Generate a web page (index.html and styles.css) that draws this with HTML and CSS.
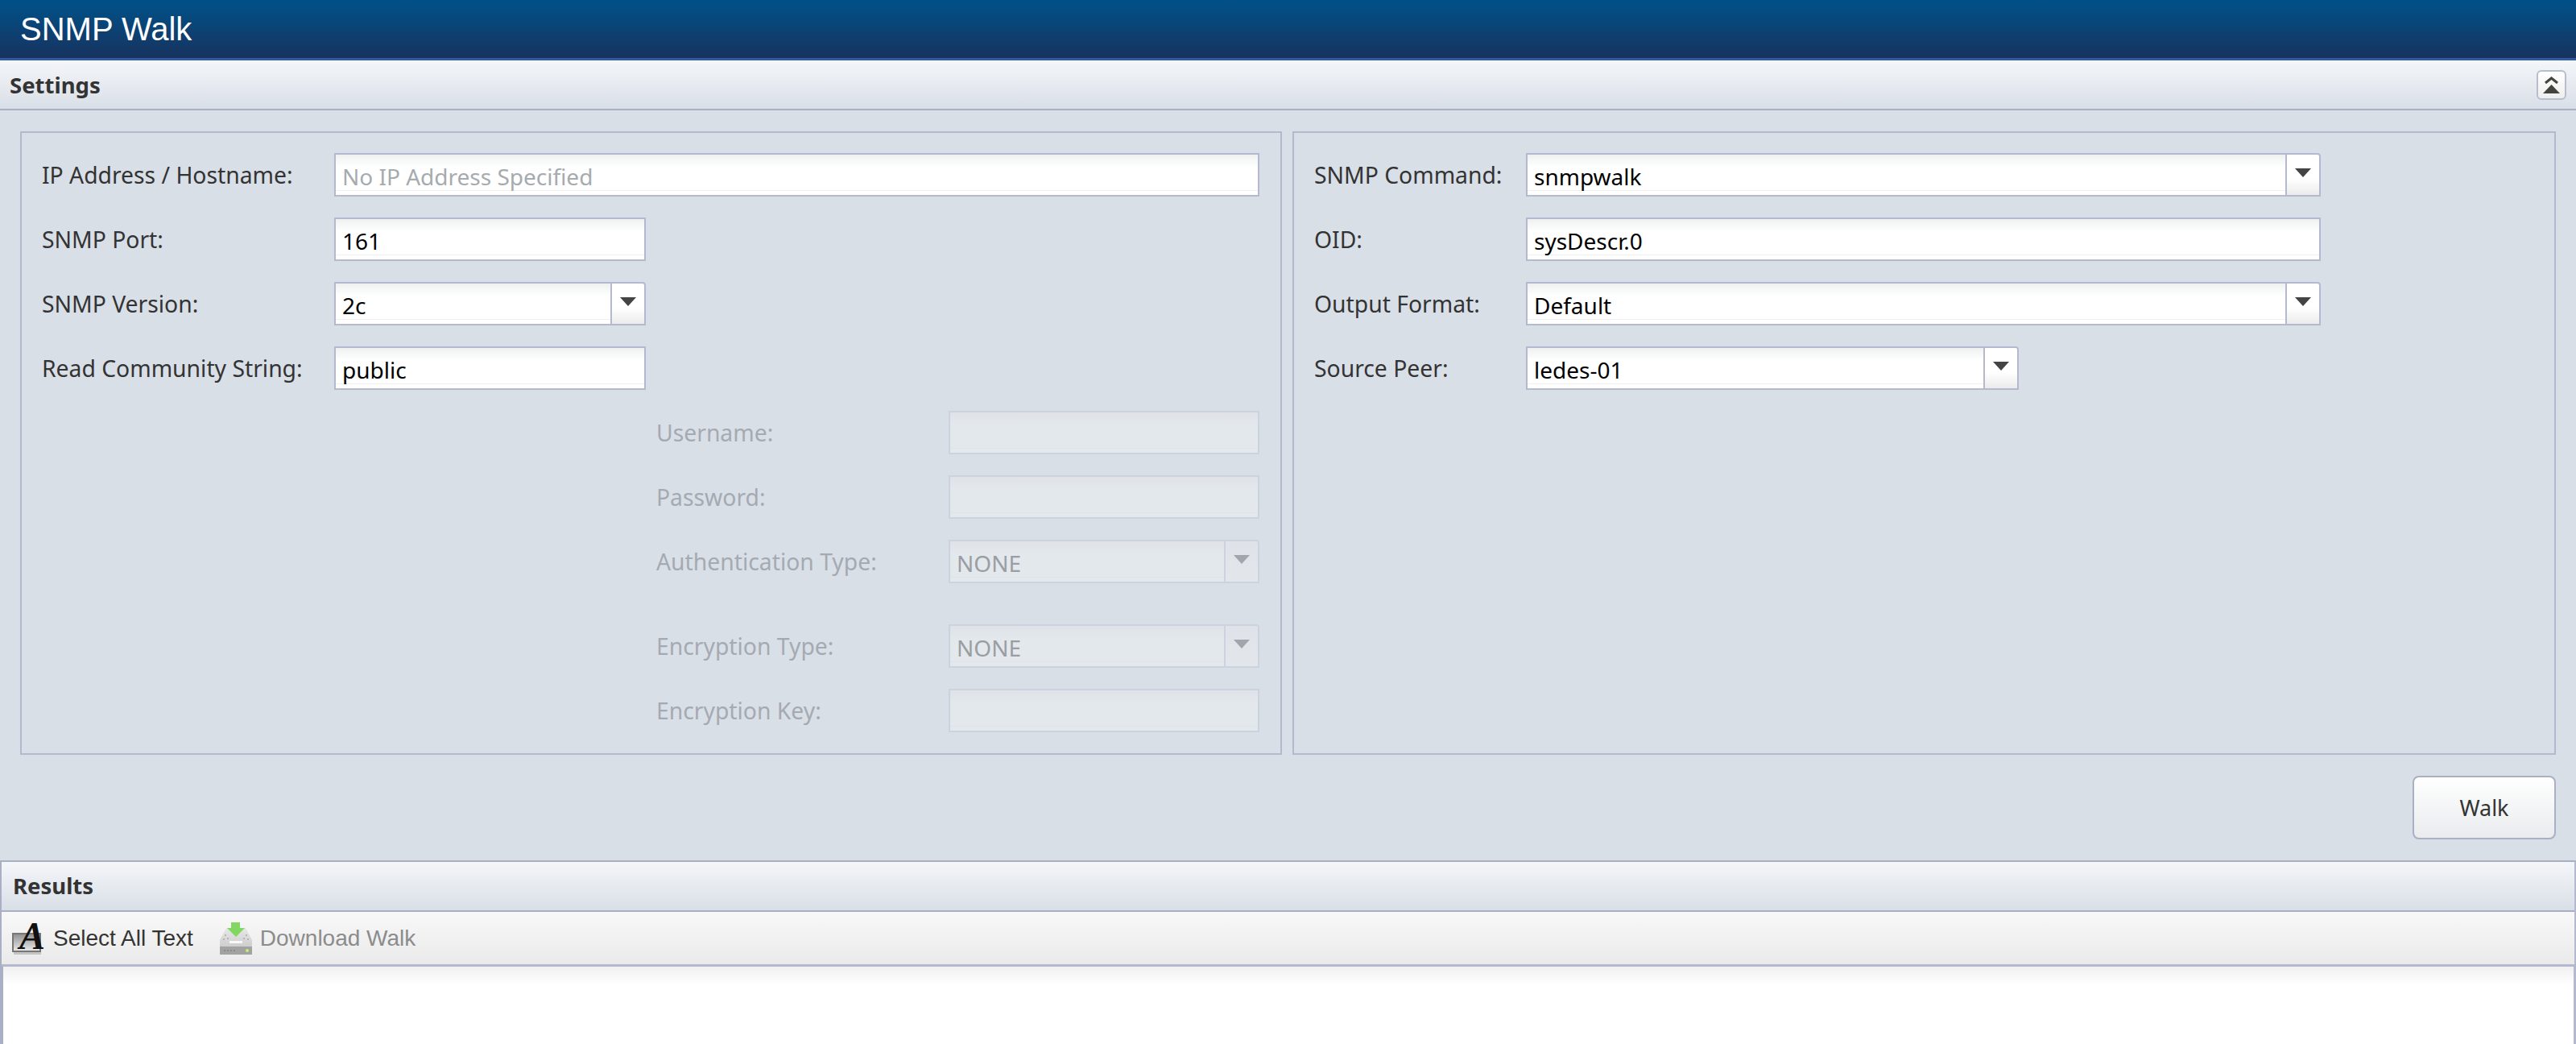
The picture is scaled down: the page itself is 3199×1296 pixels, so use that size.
FILE: index.html
```html
<!DOCTYPE HTML>
<html lang="en">
<head>
<meta name="viewport" content="width=device-width, initial-scale=1">
<title>SNMP Walk</title>
<link rel="stylesheet" href="styles.css">
</head>
<body>

<header class="title-bar">SNMP Walk</header>

<section class="settings">
  <div class="panel-head settings-head">
    <span class="panel-title">Settings</span>
    <button class="collapse-button" type="button" aria-label="Collapse">
      <svg width="25" height="25" viewBox="0 0 25 25">
        <path d="M5 10 L12.5 4 L20 10" fill="none" stroke="#45433e" stroke-width="3"/>
        <path d="M2 23 L12.5 12 L23 23 Z" fill="#45433e"/>
      </svg>
    </button>
  </div>

  <div class="form-columns">
    <div class="form-box form-left">
      <div class="row">
        <label class="field-label">IP Address / Hostname:</label>
        <input class="field wide" placeholder="No IP Address Specified">
      </div>
      <div class="row">
        <label class="field-label">SNMP Port:</label>
        <input class="field small" value="161">
      </div>
      <div class="row">
        <label class="field-label">SNMP Version:</label>
        <div class="combo small">
          <input class="field" value="2c">
          <span class="combo-button"><i class="arrow"></i></span>
        </div>
      </div>
      <div class="row">
        <label class="field-label">Read Community String:</label>
        <input class="field small" value="public">
      </div>

      <div class="row off">
        <label class="field-label">Username:</label>
        <input class="field" disabled>
      </div>
      <div class="row off">
        <label class="field-label">Password:</label>
        <input class="field" disabled>
      </div>
      <div class="row off auth-row">
        <label class="field-label">Authentication Type:</label>
        <div class="combo">
          <input class="field" value="NONE" disabled>
          <span class="combo-button"><i class="arrow"></i></span>
        </div>
      </div>
      <div class="row off">
        <label class="field-label">Encryption Type:</label>
        <div class="combo">
          <input class="field" value="NONE" disabled>
          <span class="combo-button"><i class="arrow"></i></span>
        </div>
      </div>
      <div class="row off">
        <label class="field-label">Encryption Key:</label>
        <input class="field" disabled>
      </div>
    </div>

    <div class="form-box form-right">
      <div class="row">
        <label class="field-label">SNMP Command:</label>
        <div class="combo long">
          <input class="field" value="snmpwalk">
          <span class="combo-button"><i class="arrow"></i></span>
        </div>
      </div>
      <div class="row">
        <label class="field-label">OID:</label>
        <input class="field long" value="sysDescr.0">
      </div>
      <div class="row">
        <label class="field-label">Output Format:</label>
        <div class="combo long">
          <input class="field" value="Default">
          <span class="combo-button"><i class="arrow"></i></span>
        </div>
      </div>
      <div class="row">
        <label class="field-label">Source Peer:</label>
        <div class="combo medium">
          <input class="field" value="ledes-01">
          <span class="combo-button"><i class="arrow"></i></span>
        </div>
      </div>
    </div>
  </div>

  <div class="actions">
    <button class="walk-button" type="button">Walk</button>
  </div>
</section>

<section class="results">
  <div class="panel-head results-head">
    <span class="panel-title">Results</span>
  </div>
  <div class="toolbar">
    <a class="tool">
      <svg class="tool-icon" width="42" height="44" viewBox="0 0 42 44">
        <defs>
          <linearGradient id="screen" x1="0" y1="0" x2="0" y2="1">
            <stop offset="0" stop-color="#8f8f8f"/>
            <stop offset="1" stop-color="#ececec"/>
          </linearGradient>
        </defs>
        <rect x="1" y="16" width="34" height="22" fill="url(#screen)" stroke="#777777" stroke-width="2"/>
        <rect x="2" y="39" width="34" height="3" fill="#c4c4c4"/>
        <text class="tool-letter" x="9" y="35">A</text>
      </svg>
      <span>Select All Text</span>
    </a>
    <a class="tool tool-off">
      <svg class="tool-icon" width="40" height="40" viewBox="0 0 40 40">
        <defs>
          <linearGradient id="drive" x1="0" y1="0" x2="0" y2="1">
            <stop offset="0" stop-color="#e8e8e8"/>
            <stop offset="1" stop-color="#c2c2c2"/>
          </linearGradient>
        </defs>
        <path d="M8 7 L32 7 L40 22 L40 40 L0 40 L0 22 Z" fill="url(#drive)"/>
        <path d="M6 15h2v2h-2zM32 15h2v2h-2zM4 20h2v2h-2zM34 20h2v2h-2zM9 19h2v2h-2zM29 19h2v2h-2z" fill="#b4b4b4"/>
        <rect x="12" y="23" width="16" height="3" fill="#f8f8f8"/>
        <rect x="0" y="30" width="40" height="10" fill="#a2a2a2"/>
        <path d="M5 34h2v2h-2zM9 34h2v2h-2zM13 34h2v2h-2zM17 34h2v2h-2z" fill="#8c8c8c"/>
        <circle cx="34" cy="35" r="2" fill="#c3f06e"/>
        <path d="M14 0 L25 0 L25 7 L31 7 L20 18 L9 7 L14 7 Z" fill="#80d860"/>
      </svg>
      <span>Download Walk</span>
    </a>
  </div>
  <div class="output"></div>
</section>

</body>
</html>
```

FILE: styles.css
```css
/* Overall page */
html, body {
  height: 100%;
}

body {
  margin: 0;
  background: #d9dfe7;
  color: #333333;
  font-family: 'Noto Sans', sans-serif;
  font-size: 28.3px;
  display: flex;
  flex-direction: column;
  overflow: hidden;
}

/* Title bar */
.title-bar {
  height: 72px;
  flex: none;
  padding-left: 25px;
  background: linear-gradient(#024f85 10%, #17335f);
  border-top: 1px solid #2c6690;
  margin-top: -1px;
  border-bottom: 3px solid #2f5c9e;
  color: #ffffff;
  font-family: 'Liberation Sans', sans-serif;
  font-size: 40px;
  line-height: 72px;
}

/* Panel headers */
.panel-head {
  display: flex;
  align-items: center;
  justify-content: space-between;
  background: linear-gradient(#f4f6f9, #d9dfe7);
  border-bottom: 2px solid #a9b0c3;
}

.panel-title {
  font-weight: bold;
  font-size: 27.5px;
  color: #333333;
}

.settings-head {
  height: 60px;
  padding: 0 12px;
}

.collapse-button {
  width: 37px;
  height: 37px;
  padding: 0;
  display: flex;
  align-items: center;
  justify-content: center;
  background: linear-gradient(#ffffff, #eeeeee);
  border: 2px solid #b8bdcc;
  border-radius: 6px;
}

/* Form boxes */
.form-columns {
  display: flex;
  gap: 13px;
  margin: 26px 25px 0;
}

.form-box {
  box-sizing: border-box;
  height: 774px;
  padding: 25px;
  border: 2px solid #b5b9cf;
}

.form-left {
  width: 1567px;
}

.form-right {
  flex: 1;
}

.row {
  display: flex;
  align-items: center;
  height: 54px;
  margin-bottom: 26px;
}

.form-left .field-label {
  width: 363px;
}

.form-right .field-label {
  width: 263px;
}

.field-label {
  flex: none;
  line-height: 54px;
}

.field {
  box-sizing: border-box;
  height: 54px;
  padding: 4px 8px 0;
  border: 2px solid #b5b9cf;
  border-radius: 0;
  outline: none;
  background: linear-gradient(#eff1f1, #ffffff 16px, #ffffff calc(100% - 6px), #f0f0f0 calc(100% - 6px), #f0f0f0 calc(100% - 5px), #ffffff calc(100% - 5px));
  color: #000000;
  font-family: 'Noto Sans', sans-serif;
  font-size: 28px;
}

.field::placeholder {
  color: #a6abaf;
  opacity: 1;
}

.wide {
  width: 1149px;
}

.small {
  width: 387px;
}

.long {
  width: 987px;
}

.medium {
  width: 612px;
}

/* Combo boxes */
.combo {
  display: flex;
  flex: none;
  height: 54px;
}

.combo .field {
  flex: 1;
  min-width: 0;
  border-right: none;
}

.combo-button {
  box-sizing: border-box;
  flex: none;
  width: 44px;
  display: flex;
  justify-content: center;
  padding-top: 17px;
  background: linear-gradient(#ffffff 60%, #ebebeb);
  border: 2px solid #b5b9cf;
  border-top-right-radius: 4px;
}

.arrow {
  width: 0;
  height: 0;
  border-left: 10px solid transparent;
  border-right: 10px solid transparent;
  border-top: 11px solid #444444;
}

/* Disabled rows */
.off {
  margin-left: 763px;
}

.form-left .off .field-label {
  width: 363px;
  color: #a5aab2;
}

.off .field,
.off .combo {
  width: 386px;
}

.off .field {
  border-color: #cdd2df;
  background: linear-gradient(#dfe3e9, #e3e8ec 16px, #e3e8ec calc(100% - 6px), #dfe3e9 calc(100% - 6px), #dfe3e9 calc(100% - 5px), #e3e8ec calc(100% - 5px));
  color: #9a9ea3;
}

.off .combo-button {
  background: linear-gradient(#dfe3e9, #e3e7ec);
  border-color: #cdd2df;
}

.off .arrow {
  border-top-color: #a2a6ac;
}

.auth-row {
  margin-bottom: 51px;
}

/* Walk button */
.actions {
  display: flex;
  justify-content: flex-end;
  padding: 26px 25px;
}

.walk-button {
  width: 178px;
  height: 79px;
  background: linear-gradient(#ffffff, #e9ebee);
  border: 2px solid #a9b0c3;
  border-radius: 8px;
  color: #333333;
  font-family: 'Noto Sans', sans-serif;
  font-size: 27px;
}

/* Results */
.results {
  flex: 1;
  display: flex;
  flex-direction: column;
  min-height: 0;
  border-top: 2px solid #a9b0c3;
  border-left: 2px solid #a9b0c3;
  border-right: 2px solid #b5b9cf;
}

.results-head {
  height: 62px;
  padding: 0 14px 2px;
  box-sizing: border-box;
}

.toolbar {
  box-sizing: border-box;
  height: 68px;
  display: flex;
  align-items: center;
  gap: 33px;
  padding: 0 13px;
  background: linear-gradient(#f8f8f8, #eaeaea);
  border-bottom: 3px solid #b5b9cf;
}

.tool {
  display: flex;
  align-items: center;
  gap: 9px;
  font-family: 'Liberation Sans', sans-serif;
  font-size: 28px;
  color: #333333;
}

.tool-off {
  color: #8c8c8c;
}

.tool-off .tool-icon {
  margin-right: 1px;
}

.tool-icon {
  overflow: visible;
}

.tool-letter {
  font-family: 'Liberation Serif', serif;
  font-weight: bold;
  font-style: italic;
  font-size: 48px;
  fill: #111111;
}

.output {
  flex: 1;
  border-left: 2px solid #a9b0c3;
  border-right: 1px solid #b5b9cf;
  background: linear-gradient(#f0f0f0, #ffffff 22px);
}
```
